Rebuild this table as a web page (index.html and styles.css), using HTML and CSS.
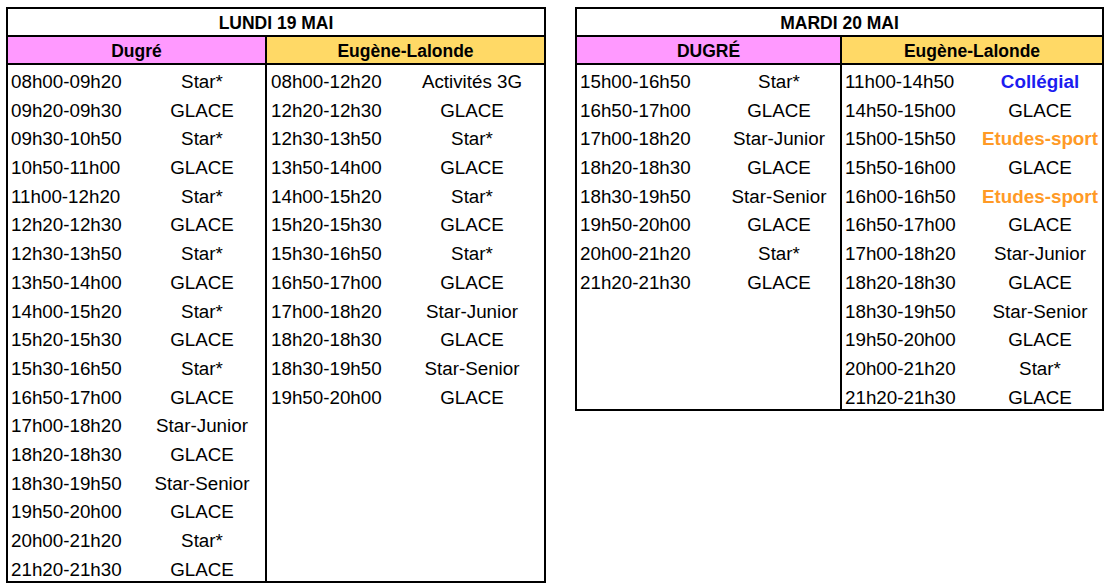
FILE: index.html
```html
<!DOCTYPE html>
<html lang="fr">
<head>
<meta charset="utf-8">
<title>Horaire glace</title>
<link rel="stylesheet" href="styles.css">
</head>
<body>
<div class="page">
  <section class="sched sched-left">
    <div class="title">LUNDI 19 MAI</div>
    <div class="cols">
      <div class="col col-a">
        <div class="head pink">Dugré</div>
        <div class="row"><span class="t">08h00-09h20</span><span class="a">Star*</span></div>
        <div class="row"><span class="t">09h20-09h30</span><span class="a">GLACE</span></div>
        <div class="row"><span class="t">09h30-10h50</span><span class="a">Star*</span></div>
        <div class="row"><span class="t">10h50-11h00</span><span class="a">GLACE</span></div>
        <div class="row"><span class="t">11h00-12h20</span><span class="a">Star*</span></div>
        <div class="row"><span class="t">12h20-12h30</span><span class="a">GLACE</span></div>
        <div class="row"><span class="t">12h30-13h50</span><span class="a">Star*</span></div>
        <div class="row"><span class="t">13h50-14h00</span><span class="a">GLACE</span></div>
        <div class="row"><span class="t">14h00-15h20</span><span class="a">Star*</span></div>
        <div class="row"><span class="t">15h20-15h30</span><span class="a">GLACE</span></div>
        <div class="row"><span class="t">15h30-16h50</span><span class="a">Star*</span></div>
        <div class="row"><span class="t">16h50-17h00</span><span class="a">GLACE</span></div>
        <div class="row"><span class="t">17h00-18h20</span><span class="a">Star-Junior</span></div>
        <div class="row"><span class="t">18h20-18h30</span><span class="a">GLACE</span></div>
        <div class="row"><span class="t">18h30-19h50</span><span class="a">Star-Senior</span></div>
        <div class="row"><span class="t">19h50-20h00</span><span class="a">GLACE</span></div>
        <div class="row"><span class="t">20h00-21h20</span><span class="a">Star*</span></div>
        <div class="row"><span class="t">21h20-21h30</span><span class="a">GLACE</span></div>
      </div>
      <div class="col col-b">
        <div class="head yellow">Eugène-Lalonde</div>
        <div class="row"><span class="t">08h00-12h20</span><span class="a">Activités 3G</span></div>
        <div class="row"><span class="t">12h20-12h30</span><span class="a">GLACE</span></div>
        <div class="row"><span class="t">12h30-13h50</span><span class="a">Star*</span></div>
        <div class="row"><span class="t">13h50-14h00</span><span class="a">GLACE</span></div>
        <div class="row"><span class="t">14h00-15h20</span><span class="a">Star*</span></div>
        <div class="row"><span class="t">15h20-15h30</span><span class="a">GLACE</span></div>
        <div class="row"><span class="t">15h30-16h50</span><span class="a">Star*</span></div>
        <div class="row"><span class="t">16h50-17h00</span><span class="a">GLACE</span></div>
        <div class="row"><span class="t">17h00-18h20</span><span class="a">Star-Junior</span></div>
        <div class="row"><span class="t">18h20-18h30</span><span class="a">GLACE</span></div>
        <div class="row"><span class="t">18h30-19h50</span><span class="a">Star-Senior</span></div>
        <div class="row"><span class="t">19h50-20h00</span><span class="a">GLACE</span></div>
      </div>
    </div>
  </section>

  <section class="sched sched-right">
    <div class="title">MARDI 20 MAI</div>
    <div class="cols">
      <div class="col col-c">
        <div class="head pink">DUGRÉ</div>
        <div class="row"><span class="t">15h00-16h50</span><span class="a">Star*</span></div>
        <div class="row"><span class="t">16h50-17h00</span><span class="a">GLACE</span></div>
        <div class="row"><span class="t">17h00-18h20</span><span class="a">Star-Junior</span></div>
        <div class="row"><span class="t">18h20-18h30</span><span class="a">GLACE</span></div>
        <div class="row"><span class="t">18h30-19h50</span><span class="a">Star-Senior</span></div>
        <div class="row"><span class="t">19h50-20h00</span><span class="a">GLACE</span></div>
        <div class="row"><span class="t">20h00-21h20</span><span class="a">Star*</span></div>
        <div class="row"><span class="t">21h20-21h30</span><span class="a">GLACE</span></div>
      </div>
      <div class="col col-d">
        <div class="head yellow">Eugène-Lalonde</div>
        <div class="row"><span class="t">11h00-14h50</span><span class="a blue">Collégial</span></div>
        <div class="row"><span class="t">14h50-15h00</span><span class="a">GLACE</span></div>
        <div class="row"><span class="t">15h00-15h50</span><span class="a orange">Etudes-sport</span></div>
        <div class="row"><span class="t">15h50-16h00</span><span class="a">GLACE</span></div>
        <div class="row"><span class="t">16h00-16h50</span><span class="a orange">Etudes-sport</span></div>
        <div class="row"><span class="t">16h50-17h00</span><span class="a">GLACE</span></div>
        <div class="row"><span class="t">17h00-18h20</span><span class="a">Star-Junior</span></div>
        <div class="row"><span class="t">18h20-18h30</span><span class="a">GLACE</span></div>
        <div class="row"><span class="t">18h30-19h50</span><span class="a">Star-Senior</span></div>
        <div class="row"><span class="t">19h50-20h00</span><span class="a">GLACE</span></div>
        <div class="row"><span class="t">20h00-21h20</span><span class="a">Star*</span></div>
        <div class="row"><span class="t">21h20-21h30</span><span class="a">GLACE</span></div>
      </div>
    </div>
  </section>
</div>
</body>
</html>
```

FILE: styles.css
```css
* { box-sizing: border-box; }

html, body {
  margin: 0;
  padding: 0;
  background: #ffffff;
}

body {
  font-family: "Liberation Sans", Arial, sans-serif;
  color: #000;
}

.page {
  display: flex;
  align-items: flex-start;
  gap: 29px;
  padding: 7px 0 0 6px;
}

.sched {
  border: 2px solid #000;
  display: flex;
  flex-direction: column;
}

.sched-left { width: 540px; }
.sched-right { width: 529px; }

.title {
  height: 28px;
  border-bottom: 2px solid #000;
  text-align: center;
  font-weight: bold;
  font-size: 17.5px;
  padding-top: 4px;
}

.cols {
  display: flex;
  align-items: stretch;
}

.col {
  display: flex;
  flex-direction: column;
}

.col-a { width: 259px; border-right: 2px solid #000; }
.col-b { flex: 1; }
.col-c { width: 265px; border-right: 2px solid #000; }
.col-d { flex: 1; }

.head {
  height: 28px;
  border-bottom: 2px solid #000;
  text-align: center;
  font-weight: bold;
  font-size: 17.5px;
  padding-top: 4px;
}

.pink { background: #ff99ff; }
.yellow { background: #ffd966; }

.row {
  display: flex;
  height: 28.7px;
  padding-top: 6px;
  font-size: 18.8px;
  white-space: nowrap;
}

.t {
  padding-left: 3px;
  flex: none;
}

.col-a .t { width: 131px; }
.col-b .t { width: 133px; padding-left: 4px; }
.col-c .t { width: 141px; }
.col-d .t { width: 136px; }

.a {
  flex: 1;
  text-align: center;
}

.blue {
  color: #1c1cf0;
  font-weight: bold;
}

.orange {
  color: #ff9a26;
  font-weight: bold;
}
```
